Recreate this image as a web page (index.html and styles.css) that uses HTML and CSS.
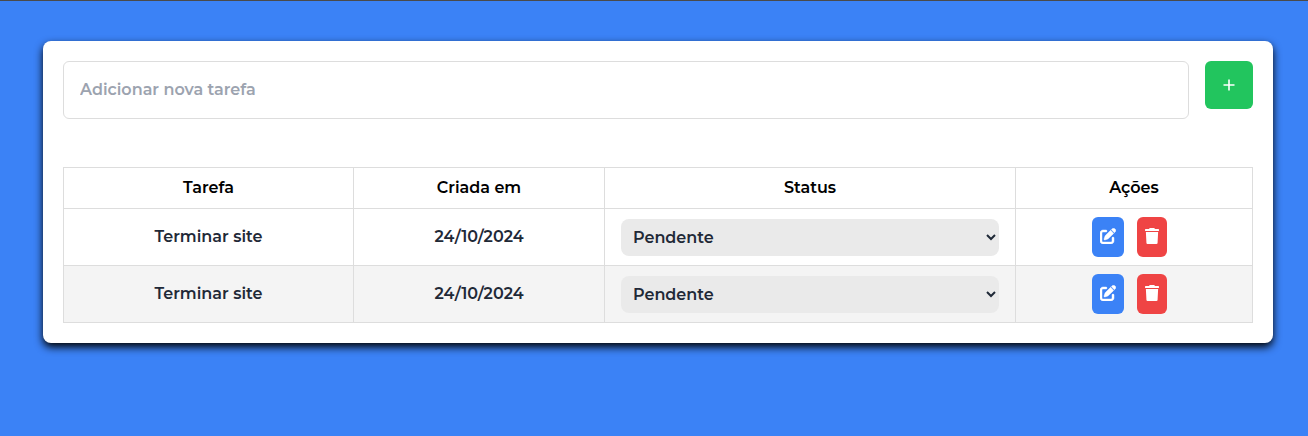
FILE: index.html
```html
<!DOCTYPE html>
<html lang="pt-BR">
<head>
<meta charset="utf-8">
<title>Tarefas</title>
<link rel="stylesheet" href="styles.css">
</head>
<body>
<svg width="0" height="0" class="sprite">
  <symbol id="edit" viewBox="0 0 512 512"><path d="M471.6 21.7c-21.9-21.9-57.3-21.9-79.2 0L362.3 51.7l97.9 97.9 30.1-30.1c21.900-21.900 21.900-57.300 0-79.200L471.600 21.700zm-299.200 220c-6.100 6.100-10.800 13.600-13.500 21.900l-29.600 88.800c-2.900 8.600-.6 18.100 5.800 24.600s15.900 8.700 24.600 5.800l88.800-29.600c8.200-2.700 15.700-7.400 21.900-13.500L437.700 172.300 339.700 74.300 172.400 241.700zM96 64C43 64 0 107 0 160V416c0 53 43 96 96 96H352c53 0 96-43 96-96V320c0-17.700-14.300-32-32-32s-32 14.300-32 32v96c0 17.700-14.300 32-32 32H96c-17.700 0-32-14.300-32-32V160c0-17.700 14.300-32 32-32h96c17.700 0 32-14.300 32-32s-14.300-32-32-32H96z"/></symbol>
  <symbol id="trash" viewBox="0 0 448 512"><path d="M135.200 17.700L128 32H20C9 32 0 41 0 52V76C0 87 9 96 20 96H428c11 0 20-9 20-20V52c0-11-9-20-20-20H320l-7.200-14.300C307.400 6.800 296.300 0 284.200 0H163.800c-12.100 0-23.200 6.800-28.600 17.700zM420 128H28L46 482c1 17 14 30 31 30H371c17 0 30-13 31-30L420 128z"/></symbol>
</svg>
<main class="card">
  <form class="add-form">
    <input class="task-input" type="text" placeholder="Adicionar nova tarefa">
    <button class="add-button" type="button" aria-label="Adicionar"><svg class="plus" viewBox="0 0 12 12"><path d="M6 .5v11M.5 6h11"/></svg></button>
  </form>
  <table class="tasks">
    <colgroup><col class="col-task"><col class="col-date"><col class="col-status"><col class="col-actions"></colgroup>
    <thead>
      <tr><th>Tarefa</th><th>Criada em</th><th>Status</th><th>Ações</th></tr>
    </thead>
    <tbody>
      <tr>
        <td>Terminar site</td><td>24/10/2024</td>
        <td><select class="status"><option>Pendente</option></select></td>
        <td><div class="actions"><button class="action edit"><svg class="icon-edit"><use href="#edit"/></svg></button><button class="action delete"><svg class="icon-trash"><use href="#trash"/></svg></button></div></td>
      </tr>
      <tr>
        <td>Terminar site</td><td>24/10/2024</td>
        <td><select class="status"><option>Pendente</option></select></td>
        <td><div class="actions"><button class="action edit"><svg class="icon-edit"><use href="#edit"/></svg></button><button class="action delete"><svg class="icon-trash"><use href="#trash"/></svg></button></div></td>
      </tr>
    </tbody>
  </table>
</main>
</body>
</html>
```
FILE: styles.css
```css
* { box-sizing: border-box; }
body {
  margin: 0;
  min-height: 436px;
  padding: 40px 35px 0 43px;
  border-top: 1px solid #4a4a4a;
  background: #3b82f6;
  color: #1f2937;
  font: 600 16px/24px Montserrat, Inter, sans-serif;
}
.sprite { position: absolute; }
.card {
  height: 302px;
  padding: 20px;
  border-radius: 8px;
  background: #fff;
  box-shadow: 0 4px 8px #000;
}
.add-form { display: flex; align-items: flex-start; gap: 16px; margin-bottom: 48px; }
.task-input {
  flex: 1;
  height: 58px;
  padding: 15px 16px 17px;
  border: 1px solid #ddd;
  border-radius: 6px;
  background: #fff;
  font: inherit;
}
.task-input::placeholder { color: #9ca3af; opacity: 1; }
.add-button {
  display: flex;
  align-items: center;
  justify-content: center;
  width: 48px;
  height: 48px;
  padding: 0 0 1px;
  border: 0;
  border-radius: 6px;
  background: #22c55e;
}
.plus { width: 12px; height: 12px; fill: none; stroke: #fff; stroke-width: 1.6; }
.tasks { width: 1190px; table-layout: fixed; border-collapse: collapse; }
.col-task { width: 290px; }
.col-date { width: 251px; }
.col-status { width: 411px; }
.col-actions { width: 237px; }
th, td { padding: 8px 16px; border: 1px solid #ddd; text-align: center; }
th { height: 41px; padding: 8px; color: #000; font-weight: 600; line-height: 24px; }
td { height: 57px; }
tbody tr:nth-child(even) { background: #f4f4f4; }
.status {
  display: block;
  width: 100%;
  height: 37px;
  margin-top: 1px;
  padding: 8px;
  border: 0;
  border-radius: 8px;
  background: #eaeaea;
  color: #1f2937;
  font: inherit;
  line-height: 21px;
}
.actions { display: flex; justify-content: center; gap: 13px; padding-right: 9px; }
.action {
  display: flex;
  align-items: center;
  justify-content: center;
  height: 40px;
  padding: 0 8px 2px;
  border: 0;
  border-radius: 6px;
  color: #fff;
}
.edit { background: #3b82f6; }
.delete { background: #ef4444; }
.icon-edit { width: 16px; height: 16px; overflow: visible; fill: currentColor; stroke: currentColor; stroke-width: 14; }
.icon-trash { width: 14px; height: 16px; fill: currentColor; }
```
